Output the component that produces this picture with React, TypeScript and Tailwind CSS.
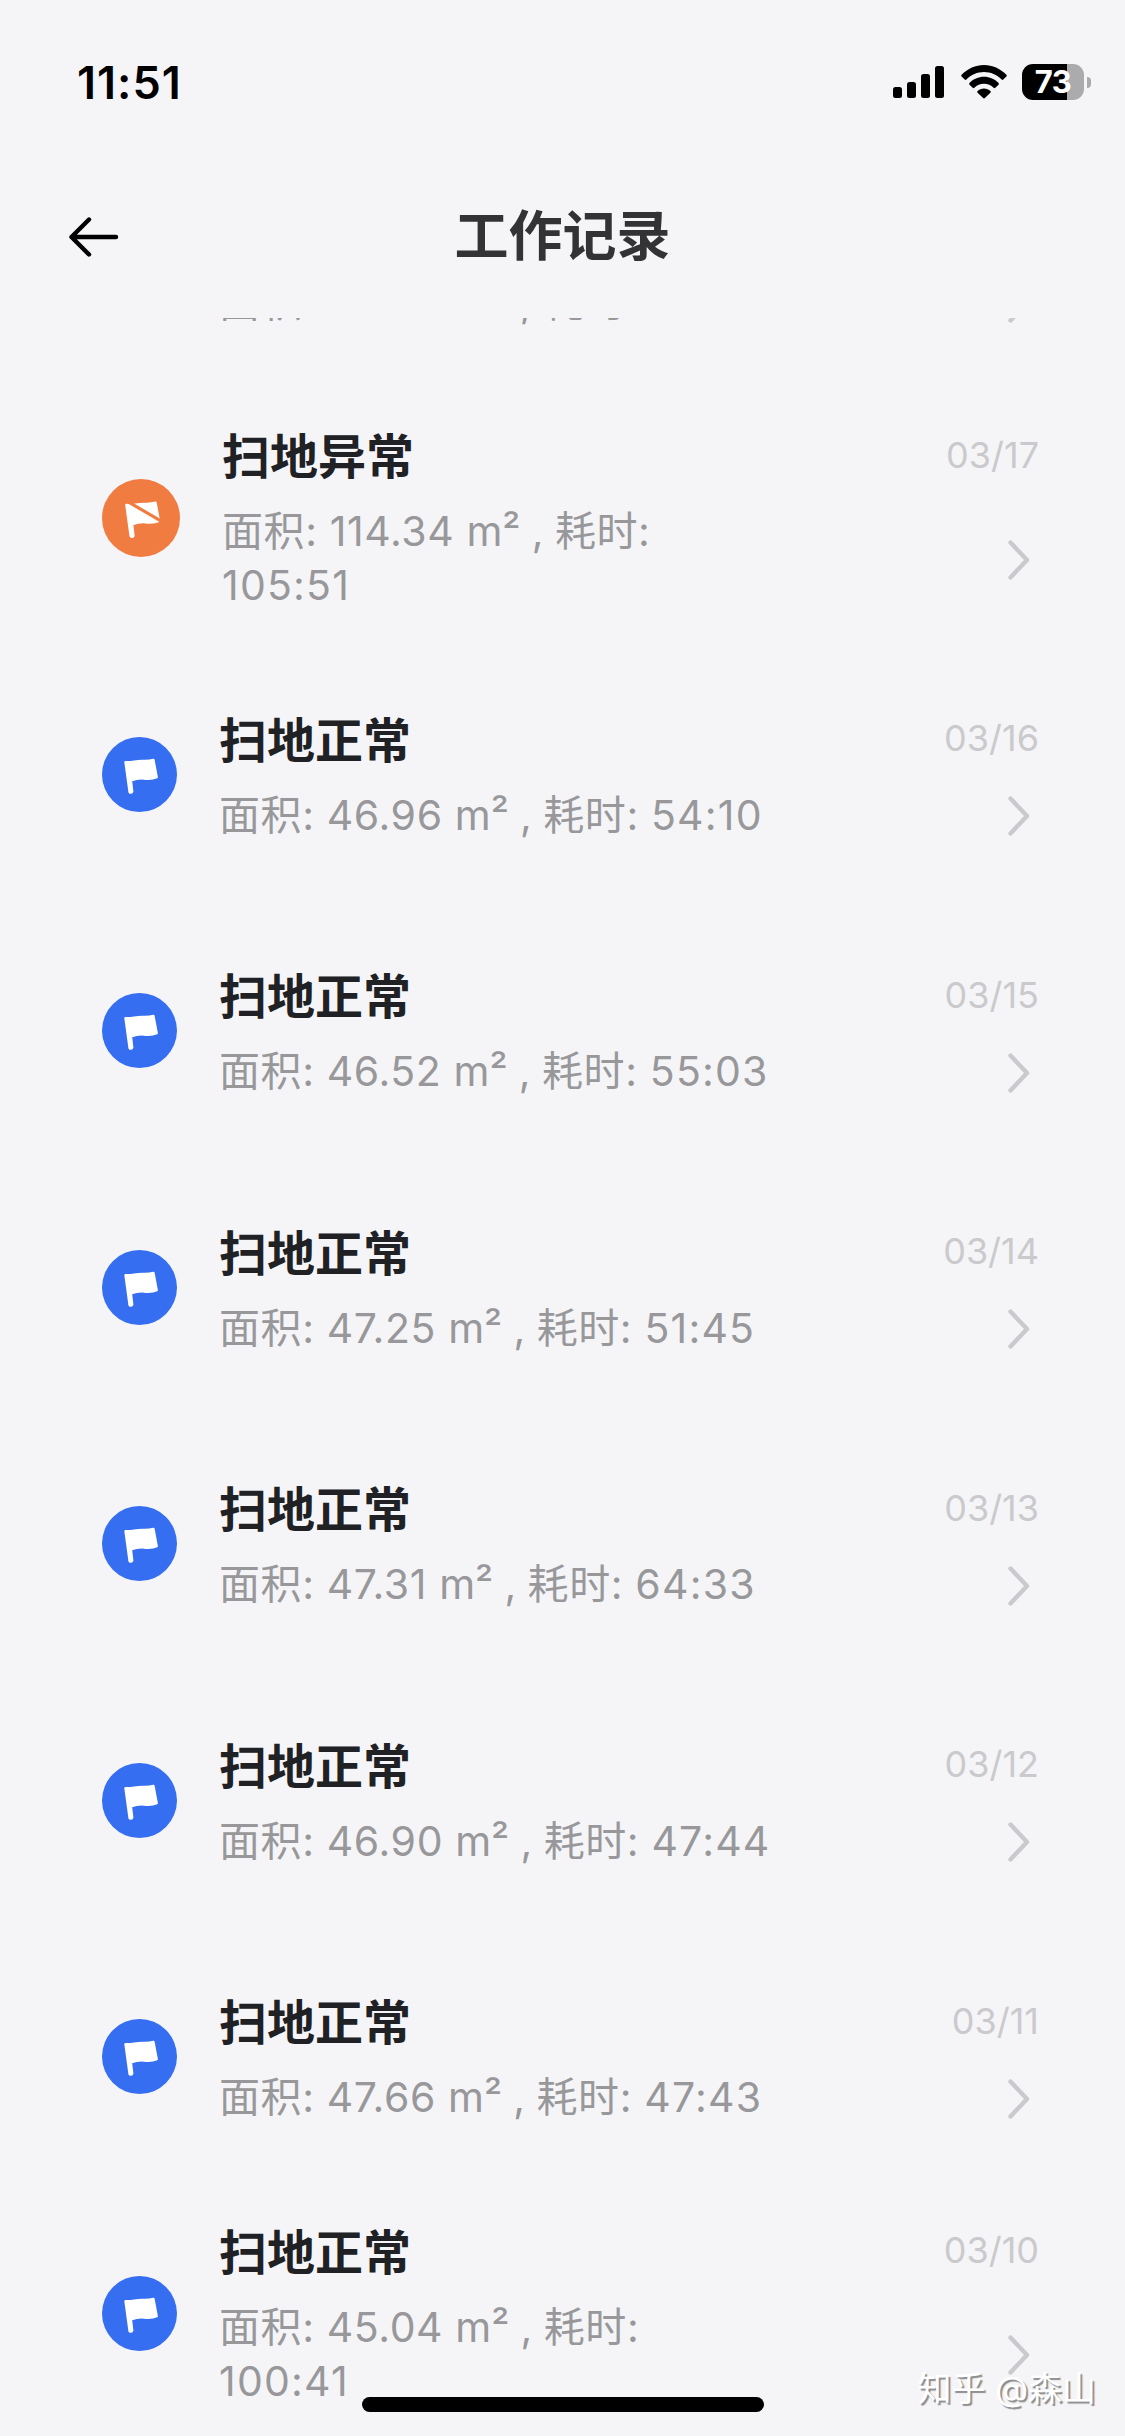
// Types
interface WorkRecord {
  date: string;
  area: string;
  duration: string;
  failed?: boolean;
}

const records: WorkRecord[] = [
  { date: "03/18", area: "46.80", duration: "51:27" },
  { date: "03/17", area: "114.34", duration: "105:51", failed: true },
  { date: "03/16", area: "46.96", duration: "54:10" },
  { date: "03/15", area: "46.52", duration: "55:03" },
  { date: "03/14", area: "47.25", duration: "51:45" },
  { date: "03/13", area: "47.31", duration: "64:33" },
  { date: "03/12", area: "46.90", duration: "47:44" },
  { date: "03/11", area: "47.66", duration: "47:43" },
  { date: "03/10", area: "45.04", duration: "100:41" },
];

// Icons
const SignalIcon = () => (
  <svg width="51" height="32" viewBox="0 0 51 32">
    <rect x="0" y="21" width="9" height="11" rx="2.5" />
    <rect x="14" y="16" width="9" height="16" rx="2.5" />
    <rect x="28" y="8" width="9" height="24" rx="2.5" />
    <rect x="42" y="0" width="9" height="32" rx="2.5" />
  </svg>
);

const WifiIcon = () => (
  <svg width="46" height="34" viewBox="0 0 46 34">
    <path d="M.6 9.8C6.700 3.600 14.500 0 23 0s16.300 3.600 22.400 9.800c.5.500.5 1.200 0 1.700l-3.100 3.100c-.5.500-1.200.5-1.700 0C35.800 9.800 29.700 7.100 23 7.100S10.200 9.800 5.400 14.600c-.5.500-1.200.5-1.700 0L.6 11.500c-.5-.5-.5-1.200 0-1.700Z" />
    <path d="M8.500 18c3.800-3.900 8.900-6.200 14.500-6.200S33.700 14.100 37.500 18c.5.500.5 1.200 0 1.700l-3.200 3.100c-.5.500-1.200.5-1.700 0-2.500-2.500-5.800-4-9.600-4s-7.100 1.500-9.600 4c-.5.500-1.200.5-1.700 0l-3.200-3.100c-.5-.5-.5-1.200 0-1.700Z" />
    <path d="M16.600 26c1.700-1.600 3.900-2.500 6.400-2.500s4.700.9 6.400 2.500c.5.500.5 1.200 0 1.700l-5.500 5.300c-.5.500-1.300.5-1.800 0l-5.500-5.300c-.5-.5-.5-1.200 0-1.700Z" />
  </svg>
);

const BackIcon = () => (
  <svg
    width="50"
    height="42"
    viewBox="0 0 50 42"
    fill="none"
    stroke="#000"
    strokeWidth="4.400"
    strokeLinecap="round"
    strokeLinejoin="round"
  >
    <path d="M47 21H2.500M20 3.500 2.500 21 20 38.500" />
  </svg>
);

const ChevronIcon = () => (
  <svg
    width="22"
    height="40"
    viewBox="0 0 22 40"
    fill="none"
    stroke="#c9c9ce"
    strokeWidth="4.400"
    strokeLinecap="round"
    strokeLinejoin="round"
  >
    <path d="M2.500 2.500 19 20 2.500 37.500" />
  </svg>
);

const FlagIcon = ({ failed }: { failed?: boolean }) => (
  <svg
    viewBox="0 0 75 75"
    className={failed ? "size-[78px] shrink-0" : "size-[75px] shrink-0"}
  >
    <circle cx="37.500" cy="37.500" r="37.500" fill={failed ? "#f07c41" : "#356ef0"} />
    <path
      d="M23.400 25C29 25.800 34 23.600 41 23.900 46 24.100 49 23.600 51.500 22.800L54.800 40.300C50 42.400 46 42.200 42 41.600 37 41 34 41.800 29 43.500L30.300 54.600C30 56 28.200 56 27.500 55Z"
      fill="#fff"
      stroke="#fff"
      strokeWidth="2.200"
      strokeLinejoin="round"
    />
    {failed && <path d="M26 22.500 57 40.500" stroke="#f07c41" strokeWidth="3" />}
  </svg>
);

const StatusBar = () => (
  <div className="flex h-[164px] shrink-0 justify-between pt-[64px] pr-[34px] pl-[77px]">
    <span className="pt-px text-[45px] leading-[36px] font-semibold tracking-[1px] text-black">
      11:51
    </span>
    <div className="flex h-9 items-center">
      <SignalIcon />
      <div className="ml-[17px]">
        <WifiIcon />
      </div>
      <div className="ml-[15px] flex h-9 w-[62px] items-center justify-center rounded-[11px] bg-[linear-gradient(90deg,#000_73%,#ababad_73%)] text-[31px] font-bold tracking-[-0.5px] text-white">
        73
      </div>
      <div className="ml-[3px] h-[11px] w-1 rounded-r-full bg-[#ababad]" />
    </div>
  </div>
);

const RecordRow = ({ record }: { record: WorkRecord }) => (
  <li className="flex h-[256.5px] shrink-0 items-center gap-[42px] pr-[86px] pl-[102px]">
    <FlagIcon failed={record.failed} />
    <div className="flex-1">
      <div className="flex items-center justify-between">
        <h2 className="text-[48px] leading-[68px] font-bold text-[#202124]">
          {record.failed ? "扫地异常" : "扫地正常"}
        </h2>
        <span className="pb-[5px] text-[36px] text-[#cacacc]">{record.date}</span>
      </div>
      <div className="mt-[13px] flex items-center justify-between pr-[9px]">
        <p className="w-[555px] text-[41px] leading-[54px] tracking-[0.6px] text-[#98989b]">
          面积: {record.area} <span className="tracking-[-0.1px]">m² , </span>
          耗时: <span className="tracking-[1.2px]">{record.duration}</span>
        </p>
        <div className="pt-[3px]">
          <ChevronIcon />
        </div>
      </div>
    </div>
  </li>
);

const App = () => {
  return (
    <div className="relative flex h-[2436px] w-[1125px] flex-col overflow-hidden bg-[#f5f5f8] font-[Inter,'Noto_Sans_CJK_SC',sans-serif]">
      <StatusBar />
      <header className="grid h-[154px] shrink-0 grid-cols-[1fr_auto_1fr] items-center px-[69px] pb-[8px]">
        <BackIcon />
        <h1 className="text-[54px] leading-[72px] font-bold text-[#333336]">工作记录</h1>
      </header>
      <main className="flex-1 overflow-hidden">
        {/* list is scrolled, the first row sits mostly under the header */}
        <ul className="-mt-[185px] flex flex-col">
          {records.map((record) => (
            <RecordRow key={record.date} record={record} />
          ))}
        </ul>
      </main>
      <div className="absolute bottom-[24px] left-[362px] h-[15px] w-[402px] rounded-full bg-black" />
      <span className="absolute right-[29px] bottom-[23px] text-[34px] leading-[48px] text-white [text-shadow:2px_2px_1px_#8c8c8c]">
        知乎 @森山
      </span>
    </div>
  );
};

export default App;
